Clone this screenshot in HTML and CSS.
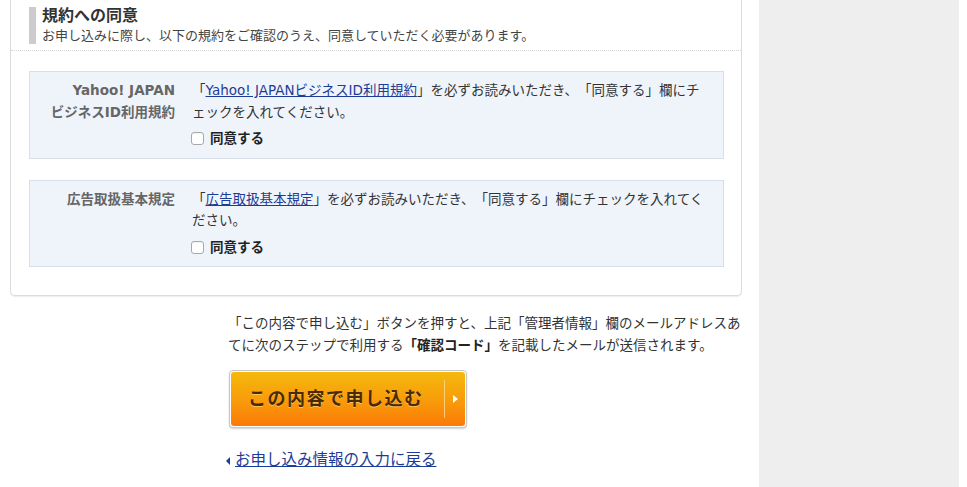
FILE: index.html
```html
<!DOCTYPE html>
<html lang="ja">
<head>
<meta charset="utf-8">
<title>規約への同意</title>
<link rel="stylesheet" href="styles.css">
</head>
<body>
<div class="page">
  <main class="main">
    <section class="card">
      <header class="card-head">
        <div class="title-block">
          <h2 class="title">規約への同意</h2>
          <p class="lead">お申し込みに際し、以下の規約をご確認のうえ、同意していただく必要があります。</p>
        </div>
      </header>
      <div class="card-body">
        <div class="term">
          <div class="term-label">Yahoo! JAPAN<br>ビジネスID利用規約</div>
          <div class="term-content">
            <p class="term-text">「<a class="link" href="#">Yahoo! JAPANビジネスID利用規約</a>」を必ずお読みいただき、「同意する」欄にチェックを入れてください。</p>
            <label class="agree"><input type="checkbox" class="check"><span class="agree-text">同意する</span></label>
          </div>
        </div>
        <div class="term">
          <div class="term-label">広告取扱基本規定</div>
          <div class="term-content">
            <p class="term-text">「<a class="link" href="#">広告取扱基本規定</a>」を必ずお読みいただき、「同意する」欄にチェックを入れてください。</p>
            <label class="agree"><input type="checkbox" class="check"><span class="agree-text">同意する</span></label>
          </div>
        </div>
      </div>
    </section>
    <div class="confirm">
      <p class="notice">「この内容で申し込む」ボタンを押すと、上記「管理者情報」欄のメールアドレスあてに次のステップで利用する<strong>「確認コード」</strong>を記載したメールが送信されます。</p>
      <button class="submit" type="button">
        <span class="submit-inner">
          <span class="submit-text">この内容で申し込む</span>
          <span class="submit-divider"></span>
          <span class="submit-arrow"></span>
        </span>
      </button>
      <a class="back" href="#"><span class="back-arrow"></span><span class="back-text">お申し込み情報の入力に戻る</span></a>
    </div>
  </main>
  <aside class="side"></aside>
</div>
</body>
</html>
```

FILE: styles.css
```css
* { box-sizing: border-box; }
html, body {
  margin: 0;
  padding: 0;
  background: #fff;
  height: 100%;
  overflow: hidden;
}
body {
  font-family: "DejaVu Sans", "Noto Sans CJK JP", sans-serif;
  color: #333;
  text-spacing-trim: space-all;
}
.page {
  display: flex;
  height: 487px;
}
.main {
  width: 759px;
  padding: 0 17px 0 10px;
}
.side {
  width: 200px;
  background: #eeeeee;
}

/* card */
.card {
  border: 1px solid #dcdcdc;
  border-top: 0;
  border-radius: 0 0 5px 5px;
  box-shadow: 0 1px 1px rgba(0, 0, 0, 0.07);
  background: #fff;
}
.card-head {
  padding: 7px 18px 6px;
  border-bottom: 1px dotted #d4d4d4;
}
.title-block {
  border-left: 7px solid #cccccc;
  padding-left: 6px;
}
.title {
  margin: 0;
  font-size: 16px;
  line-height: 17px;
  font-weight: 700;
  color: #333;
}
.lead {
  margin: 4px 0 0;
  font-size: 13px;
  line-height: 16px;
  color: #444;
}
.card-body {
  padding: 20px 17px 28px 18px;
  display: flex;
  flex-direction: column;
  gap: 21px;
}
.term {
  display: grid;
  grid-template-columns: 145px 1fr;
  column-gap: 17px;
  padding: 8px 11px 8px 0;
  background: #eff4fb;
  border: 1px solid #d8dfe9;
}
.term-label {
  text-align: right;
  font-size: 13.5px;
  line-height: 21.5px;
  font-weight: 700;
  color: #666;
}
.term-content {
  display: flex;
  flex-direction: column;
  gap: 5px;
}
.term-text {
  margin: 0;
  font-size: 13.5px;
  line-height: 21.5px;
  color: #333;
  line-break: loose;
}
.link {
  color: #1d3c96;
  text-decoration: underline;
}
.agree {
  display: flex;
  align-items: center;
  gap: 6px;
  height: 21.5px;
  margin-left: -1px;
}
.check {
  appearance: none;
  -webkit-appearance: none;
  margin: 0;
  width: 13px;
  height: 13px;
  border: 1px solid #a9a9a9;
  border-radius: 3px;
  background: #fff;
  box-shadow: inset 0 1px 1px rgba(0, 0, 0, 0.05);
}
.agree-text {
  font-size: 13.5px;
  font-weight: 700;
  color: #222;
  line-height: 21.5px;
}

/* confirmation */
.confirm {
  margin-left: 218px;
  margin-right: -2px;
  padding-top: 16px;
  display: flex;
  flex-direction: column;
  align-items: flex-start;
}
.notice {
  margin: 0;
  font-size: 13.5px;
  line-height: 22px;
  color: #333;
}
.notice strong {
  font-weight: 700;
  color: #222;
}
.submit {
  margin: 14px 0 0 1px;
  width: 238px;
  height: 58px;
  padding: 1px;
  border: 1px solid #c6c6c6;
  border-radius: 4px;
  background: #fff;
  box-shadow: 0 1px 2px rgba(0, 0, 0, 0.18);
  display: flex;
  cursor: pointer;
  font: inherit;
}
.submit-inner {
  flex: 1;
  display: flex;
  align-items: center;
  border-radius: 3px;
  background: linear-gradient(#f5b90c, #f99a0a 55%, #fb7a08);
}
.submit-text {
  width: 213px;
  padding-left: 17px;
  font-size: 18px;
  line-height: 24px;
  letter-spacing: 1.5px;
  font-weight: 700;
  color: #4a2a04;
  text-shadow: 0 1px 0 rgba(255, 214, 120, 0.7);
  text-align: left;
  white-space: nowrap;
}
.submit-divider {
  width: 1px;
  height: 38px;
  background: rgba(255, 214, 140, 0.85);
}
.submit-arrow {
  margin-left: 8px;
  width: 0;
  height: 0;
  border-left: 5px solid #fff;
  border-top: 4.5px solid transparent;
  border-bottom: 4.5px solid transparent;
}
.back {
  margin: 21px 0 0 -2px;
  display: flex;
  align-items: center;
  color: #1b3c99;
  text-decoration: none;
}
.back-arrow {
  width: 0;
  height: 0;
  border-right: 4px solid #1b3c99;
  border-top: 4px solid transparent;
  border-bottom: 4px solid transparent;
  margin-right: 5px;
  margin-top: 1px;
}
.back-text {
  font-size: 15.5px;
  line-height: 22px;
  text-decoration: underline;
}
```
